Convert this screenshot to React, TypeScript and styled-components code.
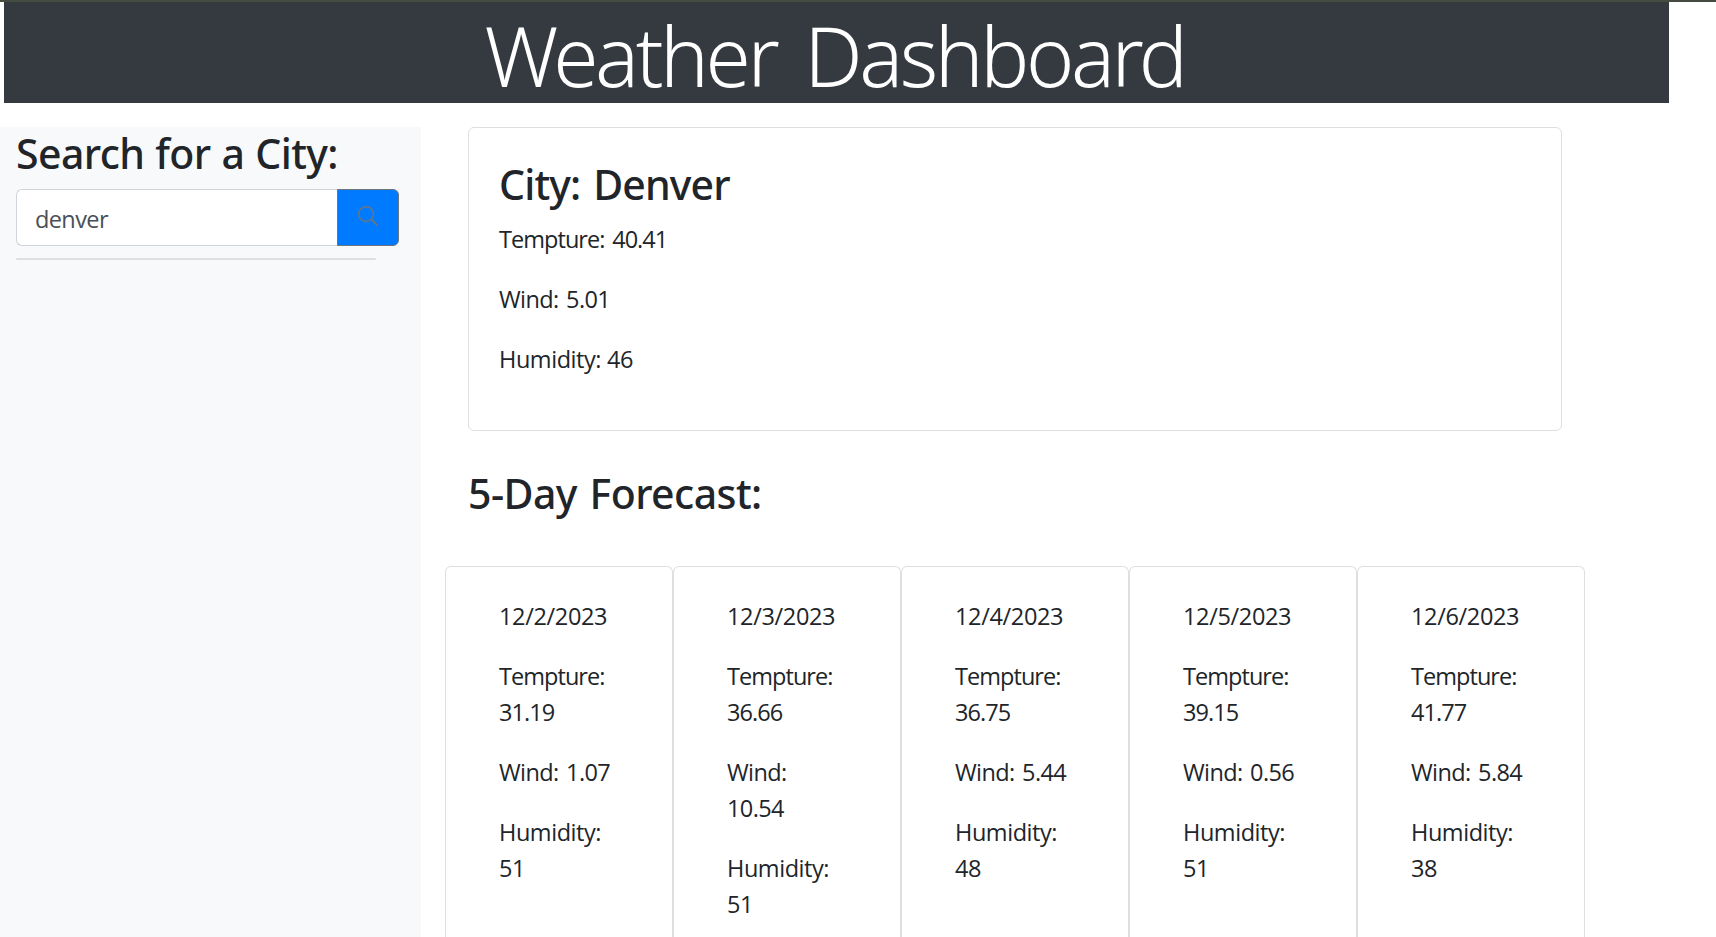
import React from "react";
import styled, { createGlobalStyle } from "styled-components";

const GlobalStyle = createGlobalStyle`
  *, *::before, *::after { box-sizing: border-box; }
  body {
    margin: 0;
    overflow: hidden;
    background: #fff;
    color: #212529;
    font: 400 23.5px/36px "Open Sans", "Noto Sans", sans-serif;
  }
`;

const Page = styled.div`
  height: 937px;
  display: flex;
  flex-direction: column;
  overflow: hidden;
  border-top: 2px solid #454b40;
`;

const Header = styled.header`
  flex: none;
  width: 1665px;
  height: 101px;
  margin-left: 4px;
  padding: 3px 4px 0 0;
  background: #343a40;
  text-align: center;
`;

const Title = styled.h1`
  margin: 0;
  color: #fff;
  font-family: "Noto Sans", sans-serif;
  font-size: 82px;
  font-weight: 300;
  line-height: 100.8px;
  letter-spacing: -3.4px;
  word-spacing: 10px;
`;

const Columns = styled.div`
  flex: 1;
  min-height: 0;
  display: flex;
  align-items: stretch;
  margin-top: 24px;
`;

const Sidebar = styled.aside`
  width: 421px;
  padding: 0 22px 0 16px;
  background: #f8f9fa;
`;

const Heading = styled.h2<{ $tracking: number; $gap: number }>`
  margin: 0;
  padding-top: 1px;
  height: 62px;
  font-family: "Noto Sans", sans-serif;
  font-size: 41px;
  font-weight: 500;
  line-height: 50.4px;
  letter-spacing: ${(p) => p.$tracking}px;
  word-spacing: ${(p) => p.$gap}px;
  white-space: nowrap;
`;

const SearchGroup = styled.form`
  display: flex;
  height: 57px;
`;

const SearchInput = styled.input`
  flex: 1;
  min-width: 0;
  padding: 3px 18px 0;
  border: 1px solid #ced4da;
  border-right: 0;
  border-radius: 6px 0 0 6px;
  outline: 0;
  background: #fff;
  color: #495057;
  font: inherit;
  letter-spacing: -0.6px;
`;

const SearchButton = styled.button`
  width: 62px;
  padding: 0 0 3px;
  display: flex;
  align-items: center;
  justify-content: center;
  border: 1px solid #6c757d;
  border-radius: 0 6px 6px 0;
  background: #007bff;
  color: #6c757d;
`;

const Divider = styled.hr`
  width: 360px;
  height: 2px;
  margin: 12px 0 0;
  border: 0;
  border-radius: 1px;
  background: #dddfe1;
`;

const Main = styled.main`
  display: flex;
  flex-direction: column;
  width: 1140px;
  margin-left: 24px;
`;

const Card = styled.section`
  flex: none;
  height: 304px;
  margin: 0 23px;
  padding: 30px;
  border: 1px solid #dfdfdf;
  border-radius: 6px;
`;

const ForecastTitle = styled.div`
  flex: none;
  height: 135px;
  padding: 36px 23px 0;
`;

const Forecast = styled.section`
  flex: 1;
  display: flex;
`;

const Day = styled.article`
  flex: 0 0 228px;
  padding: 30px 52px 0 53px;
  border: 1px solid #dfdfdf;
  border-bottom: 0;
  border-radius: 6px 6px 0 0;
`;

const Line = styled.p<{ $tracking: number; $gap?: number }>`
  margin: 0;
  padding: 1px 0 23px;
  letter-spacing: ${(p) => p.$tracking}px;
  word-spacing: ${(p) => p.$gap ?? 0}px;
`;

const days = [
  { date: "12/2/2023", temp: "31.19", wind: "1.07", humidity: 51 },
  { date: "12/3/2023", temp: "36.66", wind: "10.54", humidity: 51 },
  { date: "12/4/2023", temp: "36.75", wind: "5.44", humidity: 48 },
  { date: "12/5/2023", temp: "39.15", wind: "0.56", humidity: 51 },
  { date: "12/6/2023", temp: "41.77", wind: "5.84", humidity: 38 },
];

function Readings({ temp, wind, humidity }: { temp: string; wind: string; humidity: number }) {
  return (
    <>
      <Line $tracking={-0.95} $gap={2.5}>{`Tempture: ${temp}`}</Line>
      <Line $tracking={-0.6} $gap={2}>{`Wind: ${wind}`}</Line>
      <Line $tracking={-0.45} $gap={0.4}>{`Humidity: ${humidity}`}</Line>
    </>
  );
}

export default function App() {
  return (
    <Page>
      <GlobalStyle />
      <Header>
        <Title>Weather Dashboard</Title>
      </Header>
      <Columns>
        <Sidebar>
          <Heading $tracking={-0.6} $gap={0.9}>Search for a City:</Heading>
          <SearchGroup onSubmit={(e) => e.preventDefault()}>
            <SearchInput defaultValue="denver" spellCheck={false} />
            <SearchButton type="submit" aria-label="Search">
              <svg width="20" height="20" viewBox="0 0 20 20" fill="none" stroke="currentColor" strokeWidth="1.4">
                <circle cx="8.1" cy="8.1" r="7.4" />
                <path d="M13.3 13.3 19.4 19.4" strokeWidth="1.8" />
              </svg>
            </SearchButton>
          </SearchGroup>
          <Divider />
        </Sidebar>
        <Main>
          <Card>
            <Heading $tracking={-0.85} $gap={3}>City: Denver</Heading>
            <Readings temp="40.41" wind="5.01" humidity={46} />
          </Card>
          <ForecastTitle>
            <Heading $tracking={-0.55} $gap={2.5}>5-Day Forecast:</Heading>
          </ForecastTitle>
          <Forecast>
            {days.map((d) => (
              <Day key={d.date}>
                <Line $tracking={-0.35}>{d.date}</Line>
                <Readings temp={d.temp} wind={d.wind} humidity={d.humidity} />
              </Day>
            ))}
          </Forecast>
        </Main>
      </Columns>
    </Page>
  );
}
